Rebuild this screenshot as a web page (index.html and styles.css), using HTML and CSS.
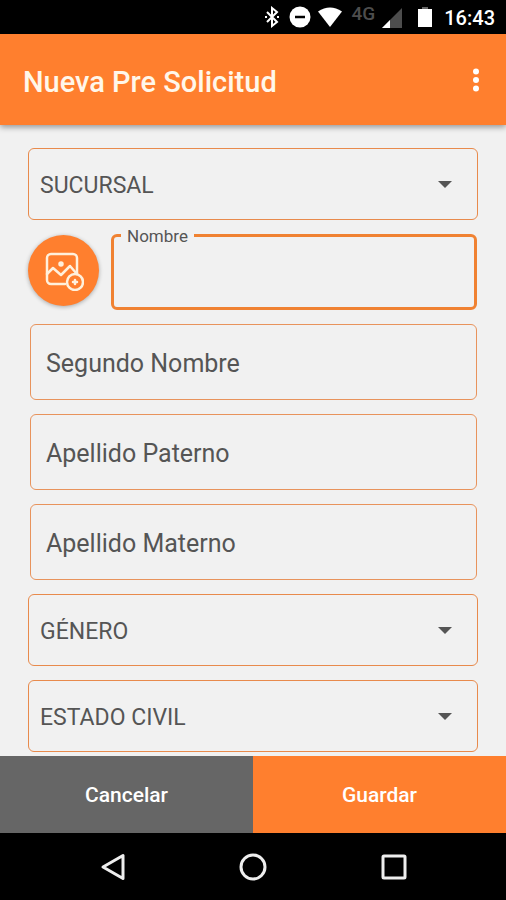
FILE: index.html
```html
<!DOCTYPE html>
<html lang="es">
<head>
  <meta charset="UTF-8" />
  <meta name="viewport" content="width=device-width, initial-scale=1.0"/>
  <title>Nueva Pre Solicitud</title>
  <link rel="stylesheet" href="styles.css">
</head>
<body>
  <div class="status-bar">
    <svg width="14" height="22" viewBox="0 0 14 22" fill="none" stroke="#fff" stroke-width="2"><path d="M2 6l10 10-5 4V2l5 4L2 16"/><path d="M0 11h2M12 11h2"/></svg>
    <svg class="dnd" width="22" height="22" viewBox="0 0 22 22"><circle cx="11" cy="11" r="10.5" fill="#fff"/><path d="M6 11h10" stroke="#000" stroke-width="2.5"/></svg>
    <svg width="26" height="22" viewBox="0 0 26 22"><path d="M1 5.500Q13-2.500 25 5.500L13 21z" fill="#fff"/></svg>
    <span class="network">4G</span>
    <svg class="signal" width="22" height="22" viewBox="0 0 22 22"><path d="M21 2v20H1z" fill="#4d4d4d"/><path d="M9 14v8H1z" fill="#fff"/></svg>
    <svg class="battery" width="16" height="22" viewBox="0 0 16 22"><path d="M5 1h6v3H5z" fill="#666"/><path d="M1 3h14v18H1z" fill="#fff"/></svg>
    <span class="time">16:43</span>
  </div>

  <header>
    <h1>Nueva Pre Solicitud</h1>
    <button type="button" class="menu" aria-label="Más opciones">
      <svg width="8" height="24" viewBox="0 0 8 24" fill="#fff"><circle cx="4" cy="3.500" r="3"/><circle cx="4" cy="12" r="3"/><circle cx="4" cy="20.500" r="3"/></svg>
    </button>
  </header>

  <form id="solicitud">
    <div class="select">
      <select aria-label="Sucursal"><option>SUCURSAL</option></select>
    </div>

    <div class="name-row">
      <button type="button" class="photo" aria-label="Agregar foto">
        <svg width="40" height="40" viewBox="0 0 40 40" fill="none" stroke="#fff0dc" stroke-width="2.500" stroke-linecap="round" stroke-linejoin="round">
          <path d="M21 33H7a4 4 0 0 1-4-4V7a4 4 0 0 1 4-4h22a4 4 0 0 1 4 4v15"/>
          <path d="M3 23l6-6 8 7 9-9 7 8"/>
          <circle cx="17" cy="13" r="1.500" fill="#fff0dc"/>
          <circle cx="31" cy="31" r="8"/>
          <path d="M31 29v4M29 31h4"/>
        </svg>
      </button>
      <div class="outlined">
        <label for="nombre">Nombre</label>
        <input type="text" id="nombre">
      </div>
    </div>

    <input type="text" class="field" placeholder="Segundo Nombre" aria-label="Segundo Nombre">
    <input type="text" class="field" placeholder="Apellido Paterno" aria-label="Apellido Paterno">
    <input type="text" class="field" placeholder="Apellido Materno" aria-label="Apellido Materno">

    <div class="select">
      <select aria-label="Género"><option>GÉNERO</option></select>
    </div>
    <div class="select">
      <select aria-label="Estado civil"><option>ESTADO CIVIL</option></select>
    </div>
  </form>

  <div class="actions">
    <button type="button" class="cancel">Cancelar</button>
    <button type="submit" class="save" form="solicitud">Guardar</button>
  </div>

  <nav>
    <button type="button" aria-label="Atrás">
      <svg width="28" height="28" viewBox="0 0 28 28"><path d="M24 2.500v23L4 14z"/></svg>
    </button>
    <button type="button" aria-label="Inicio">
      <svg width="28" height="28" viewBox="0 0 28 28"><circle cx="14" cy="14" r="12"/></svg>
    </button>
    <button type="button" aria-label="Recientes">
      <svg width="28" height="28" viewBox="0 0 28 28"><rect x="4" y="3" width="22" height="22" rx="1"/></svg>
    </button>
  </nav>
</body>
</html>
```
FILE: styles.css
```css
* {
  box-sizing: border-box;
}
body {
  margin: 0;
  height: 100vh;
  display: flex;
  flex-direction: column;
  font-family: Roboto, sans-serif;
  background: #f1f1f1;
  color: #555;
}
button {
  padding: 0;
  border: none;
  background: none;
  font-family: inherit;
  cursor: pointer;
}
svg {
  display: block;
}

.status-bar {
  flex: none;
  height: 34px;
  padding: 0 11px;
  display: flex;
  align-items: center;
  justify-content: flex-end;
  gap: 6px;
  background: #000;
  color: #fff;
}
.dnd {
  margin-left: 4px;
}
.network {
  margin: 0 0 8px 3px;
  font-size: 19px;
  font-weight: 500;
  color: #4d4d4d;
}
.signal {
  margin-right: 8px;
}
.battery {
  margin-right: 5px;
}
.time {
  padding-top: 2px;
  font-size: 20px;
  font-weight: 500;
}

header {
  flex: none;
  height: 91px;
  padding: 0 26px 0 23px;
  display: flex;
  align-items: center;
  justify-content: space-between;
  background: #ff7f2e;
  box-shadow: 0 2px 6px rgba(0,0,0,0.4);
  z-index: 1;
}
header h1 {
  margin: 0;
  padding-top: 4px;
  font-size: 29px;
  font-weight: 500;
  color: #fff7ea;
}

form {
  flex: 1;
  min-height: 0;
  overflow: auto;
  scrollbar-width: none;
  padding: 23px 28px 4px;
  display: flex;
  flex-direction: column;
  gap: 14px;
}
form > * {
  flex: none;
}
.select {
  position: relative;
}
.select::after {
  content: '';
  position: absolute;
  top: 33px;
  right: 26px;
  border: 7px solid transparent;
  border-top-color: #555;
  border-bottom: none;
  pointer-events: none;
}
select {
  appearance: none;
  display: block;
  width: 100%;
  height: 72px;
  padding: 2px 11px 0;
  border: 1px solid #e88a4c;
  border-radius: 6px;
  background: transparent;
  font-family: inherit;
  font-size: 23px;
  color: #555;
}

.name-row {
  display: flex;
  align-items: center;
  gap: 12px;
  padding-right: 1px;
}
.photo {
  flex: none;
  display: grid;
  place-items: center;
  width: 71px;
  height: 71px;
  margin-bottom: 3px;
  border-radius: 50%;
  background: #ff7f2e;
  box-shadow: 0 1px 4px rgba(0,0,0,0.3);
}
.outlined {
  flex: 1;
  position: relative;
}
.outlined label {
  position: absolute;
  top: -8px;
  left: 10px;
  padding: 0 6px;
  background: #f1f1f1;
  font-size: 17px;
  line-height: 20px;
}
.outlined input,
.field {
  height: 76px;
  padding: 2px 15px 0;
  border: 1px solid #e8935c;
  border-radius: 6px;
  background: transparent;
  font-family: inherit;
  font-size: 25px;
  color: #555;
  outline: none;
}
.outlined input {
  display: block;
  width: 100%;
  border: 3px solid #f08232;
}
.field {
  margin: 0 1px 0 2px;
}
.field::placeholder {
  color: #555;
  opacity: 1;
}

.actions {
  flex: none;
  display: flex;
  height: 77px;
}
.actions button {
  flex: 1;
  font-size: 21px;
  font-weight: 500;
  color: #fff;
}
.actions .cancel {
  background: #666;
}
.actions .save {
  background: #ff7f2e;
}

nav {
  flex: none;
  height: 67px;
  display: flex;
  align-items: center;
  justify-content: center;
  gap: 112px;
  background: #000;
}
nav svg {
  fill: none;
  stroke: #eee;
  stroke-width: 3;
  stroke-linejoin: round;
}
```
